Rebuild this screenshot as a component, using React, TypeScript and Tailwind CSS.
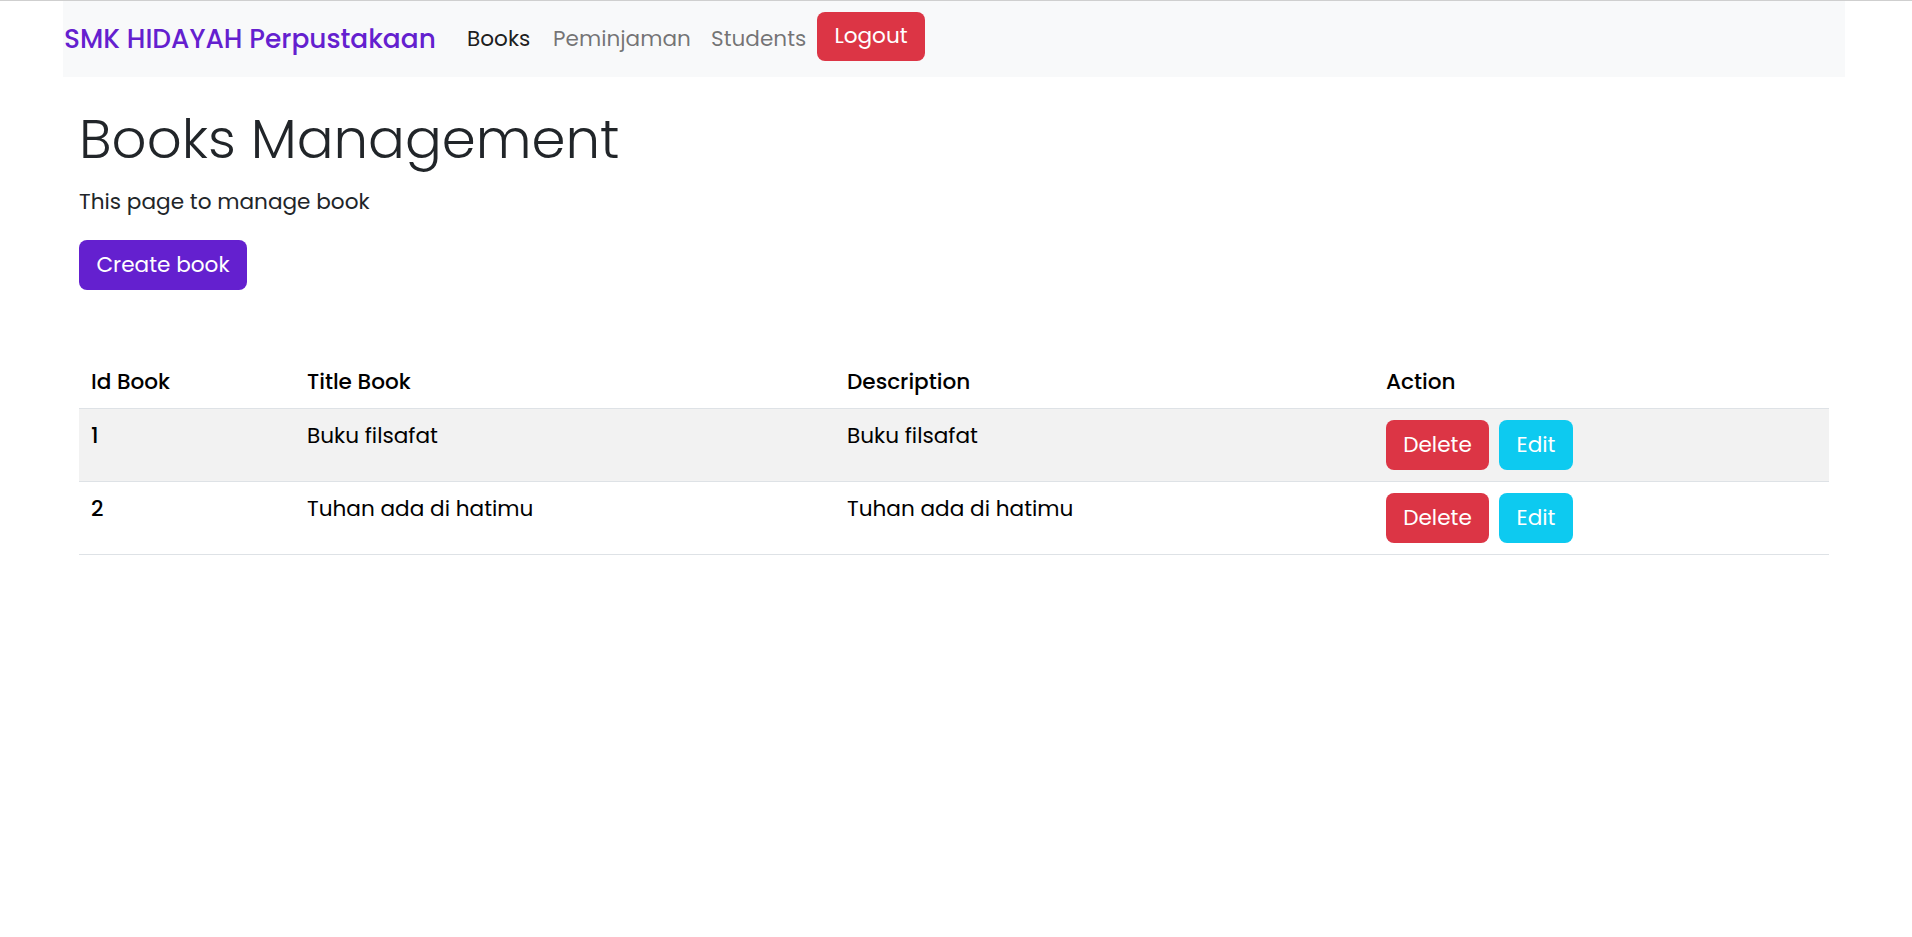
import React from 'react';

type Book = {
  id: number;
  title: string;
  description: string;
};

// Static list shown in the table
const books: Book[] = [
  { id: 1, title: 'Buku filsafat', description: 'Buku filsafat' },
  { id: 2, title: 'Tuhan ada di hatimu', description: 'Tuhan ada di hatimu' },
];

const font = { fontFamily: '"Poppins", "Open Sans", "Noto Sans", sans-serif' };

function Navbar() {
  return (
    <nav className="ml-[63px] w-[1782px] h-[76px] bg-[#f8f9fa] flex items-center">
      <div className="w-[404px] pl-[1px]">
        <a className="text-[26.4px] font-medium text-[#6420cf] whitespace-nowrap" href="#">
          SMK HIDAYAH Perpustakaan
        </a>
      </div>
      <a className="w-[86px] text-[21.6px] text-black/90" href="#">Books</a>
      <a className="w-[158px] text-[21.6px] text-black/55" href="#">Peminjaman</a>
      <a className="w-[106px] text-[21.6px] text-black/55" href="#">Students</a>
      <button className="self-start mt-[11px] w-[108px] h-[49px] rounded-[8px] bg-[#dc3545] text-white text-[21.6px]">
        Logout
      </button>
    </nav>
  );
}

export default function App() {
  return (
    <div className="min-h-screen bg-white border-t border-[#cfcfcf]" style={font}>
      <Navbar />

      <main className="ml-[63px] w-[1782px] px-[16px]">
        <h1 className="mt-[30px] text-[54.6px] leading-[1.2] font-light text-[#212529]">
          Books Management
        </h1>
        <p className="mt-[13px] text-[21.6px] leading-[1.5] text-[#212529]">
          This page to manage book
        </p>

        <button className="mt-[22px] w-[168px] h-[50px] rounded-[8px] bg-[#6420cf] text-white text-[21.6px]">
          Create book
        </button>

        {/* Books table */}
        <table className="mt-[65px] w-[1750px] table-fixed border-collapse text-[21.6px] text-black">
          <colgroup>
            <col className="w-[216px]" />
            <col className="w-[540px]" />
            <col className="w-[539px]" />
            <col className="w-[455px]" />
          </colgroup>
          <thead>
            <tr className="border-b border-[#dee2e6]">
              <th className="px-[12px] py-[12px] text-left font-medium leading-[29px]">Id Book</th>
              <th className="px-[12px] py-[12px] text-left font-medium leading-[29px]">Title Book</th>
              <th className="px-[12px] py-[12px] text-left font-medium leading-[29px]">Description</th>
              <th className="px-[12px] py-[12px] text-left font-medium leading-[29px]">Action</th>
            </tr>
          </thead>
          <tbody>
            {books.map((book, i) => (
              <tr
                key={book.id}
                className={`border-b border-[#dee2e6] ${i % 2 === 0 ? 'bg-[#f2f2f2]' : 'bg-white'}`}
              >
                <td className="px-[12px] py-[12px] align-top font-medium leading-[30px]">{book.id}</td>
                <td className="px-[12px] py-[12px] align-top leading-[30px]">{book.title}</td>
                <td className="px-[12px] py-[12px] align-top leading-[30px]">{book.description}</td>
                <td className="px-[12px] py-[11px] align-top">
                  <div className="flex gap-[10px]">
                    <button className="w-[103px] h-[50px] rounded-[8px] bg-[#dc3545] text-white text-[21.6px]">
                      Delete
                    </button>
                    <button className="w-[74px] h-[50px] rounded-[8px] bg-[#0dcaf0] text-white text-[21.6px]">
                      Edit
                    </button>
                  </div>
                </td>
              </tr>
            ))}
          </tbody>
        </table>
      </main>
    </div>
  );
}
